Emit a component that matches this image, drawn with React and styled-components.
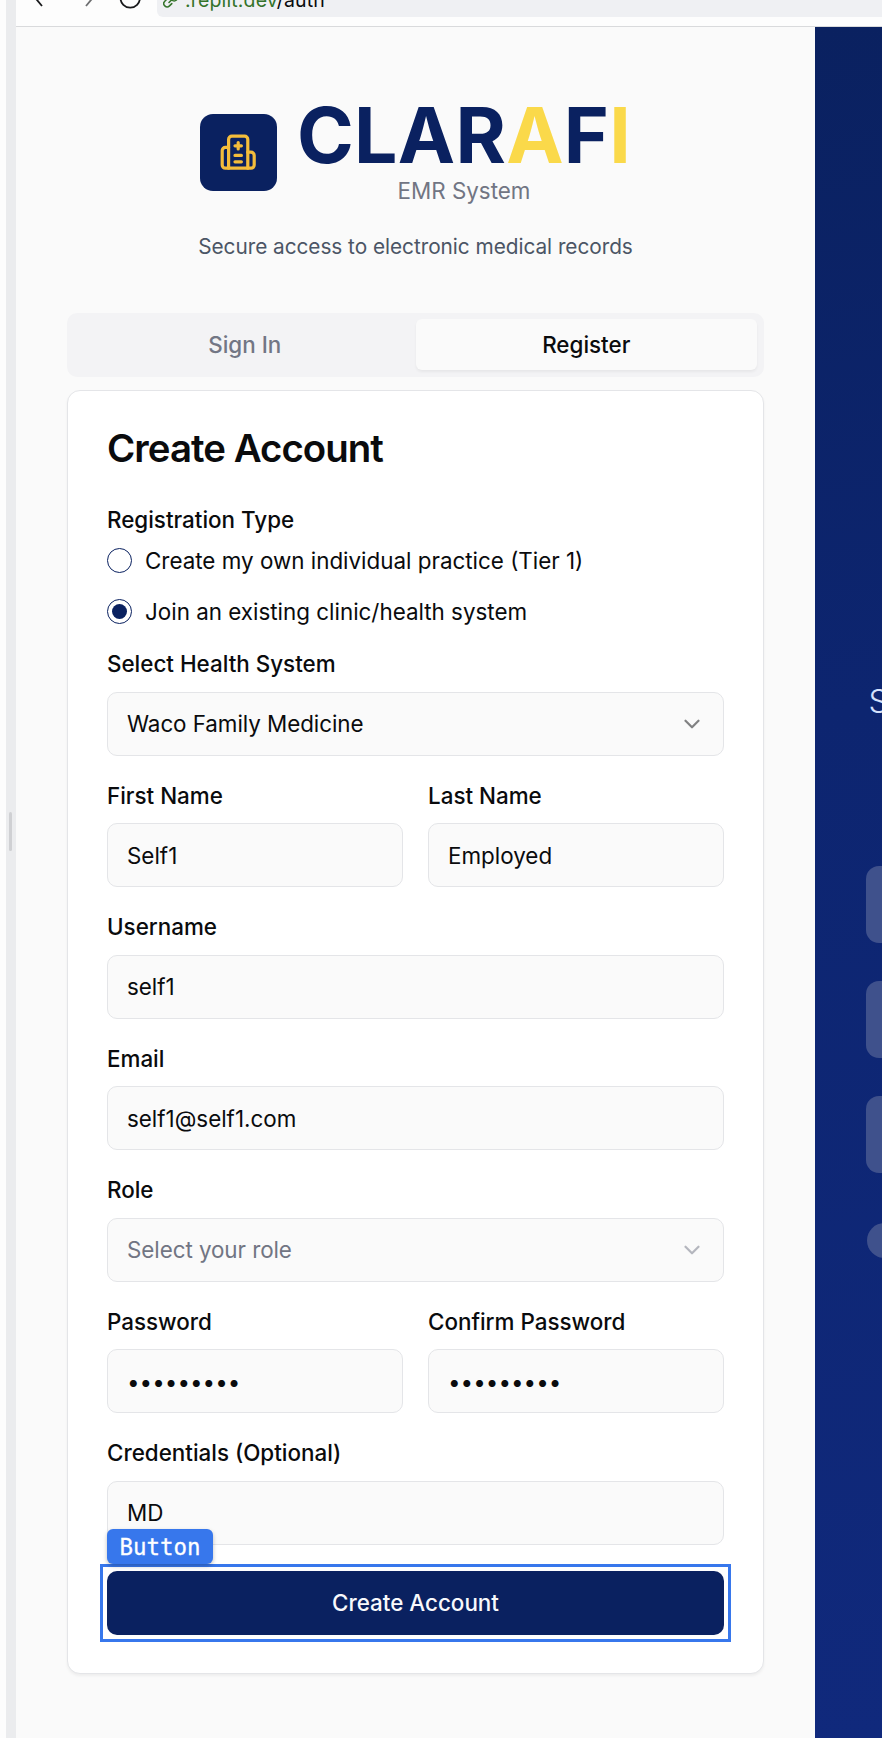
import React from "react";
import styled, { createGlobalStyle } from "styled-components";
import { ChevronDown } from "lucide-react";

const NAVY = "#0a2160";

const GlobalStyle = createGlobalStyle`
  * { box-sizing: border-box; }
  body {
    margin: 0;
    background: #fafafa;
    color: #0a0b0d;
    font-family: Inter, "Liberation Sans", sans-serif;
    -webkit-font-smoothing: antialiased;
  }
  input, button { font-family: inherit; }
`;

const Workspace = styled.div`
  display: flex;
  width: 882px;
  height: 1738px;
  overflow: hidden;
`;

const Resizer = styled.div`
  display: flex;
  align-items: center;
  flex: none;
  width: 16px;
  padding-left: 3px;
  padding-bottom: 75px;
  border-left: 6px solid #fdfdfd;
  background: #ebecee;
`;

const Grip = styled.span`
  width: 3px;
  height: 39px;
  border-radius: 2px;
  background: #cfd0d3;
`;

const Browser = styled.div`
  flex: 1;
  min-width: 0;
  display: flex;
  flex-direction: column;
`;

const BrowserBar = styled.header`
  display: flex;
  flex: none;
  height: 27px;
  background: #fdfdfd;
  border-bottom: 1px solid #d9dadc;
`;

const NavIcons = styled.svg`
  flex: none;
  width: 141px;
  height: 17px;
`;

const AddressBar = styled.div`
  flex: 1;
  display: flex;
  height: 17px;
  padding-left: 6px;
  border-radius: 0 0 0 6px;
  background: #eff0f3;
  overflow: hidden;
`;

const LinkIcon = styled.svg`
  width: 16px;
  height: 17px;
`;

const Address = styled.div`
  margin: -12px 0 0 6px;
  font-size: 19.5px;
  line-height: 25px;
  letter-spacing: 0.15px;
  white-space: nowrap;
`;

const Host = styled.span`
  color: #34732a;
`;

const Page = styled.main`
  flex: 1;
  display: flex;
  min-height: 0;
`;

const AuthPane = styled.section`
  flex: none;
  width: 799px;
  padding: 72px 51px 0;
`;

const Brand = styled.div`
  display: flex;
  justify-content: center;
  gap: 20px;
`;

const BrandMark = styled.div`
  display: flex;
  align-items: center;
  justify-content: center;
  width: 77px;
  height: 77px;
  margin-top: 15px;
  border-radius: 13px;
  background: ${NAVY};
`;

const BrandText = styled.div`
  text-align: center;
`;

const Wordmark = styled.h1`
  margin: -1px 0 0;
  color: ${NAVY};
  font-size: 76.8px;
  line-height: 76.8px;
  font-weight: 700;
  letter-spacing: 0.3px;
`;

const Accent = styled.span`
  color: #fad94a;
`;

const Product = styled.p`
  margin: 0;
  color: #717583;
  font-size: 22.4px;
  line-height: 32px;
`;

const Tagline = styled.p`
  margin: 24px 0 0;
  color: #4b5565;
  font-size: 20.8px;
  line-height: 32px;
  letter-spacing: -0.04px;
  text-align: center;
`;

const Tabs = styled.div`
  display: flex;
  height: 64px;
  margin-top: 50px;
  padding: 6px 7px 7px;
  border-radius: 10px;
  background: #f3f3f5;
`;

const Tab = styled.button`
  flex: 1;
  padding: 0;
  border: 0;
  border-radius: 6px;
  font-size: 22.4px;
  font-weight: 500;
  color: ${(p) => (p.$active ? "#0a0b0d" : "#727684")};
  background: ${(p) => (p.$active ? "#fafafa" : "transparent")};
  box-shadow: ${(p) => (p.$active ? "0 2px 3px rgba(0, 0, 0, 0.05)" : "none")};
`;

const Card = styled.form`
  height: 1284px;
  margin-top: 13px;
  padding: 38px 39px;
  border: 1px solid #e4e5e8;
  border-radius: 13px;
  background: #fff;
  box-shadow: 0 2px 3px rgba(0, 0, 0, 0.05);
`;

const CardTitle = styled.h2`
  margin: 0;
  font-size: 38.4px;
  line-height: 38px;
  font-weight: 600;
  letter-spacing: -0.96px;
`;

const RadioSection = styled.div`
  margin-top: 41px;
`;

const Label = styled.label`
  display: block;
  font-size: 22.4px;
  line-height: 24px;
  font-weight: 500;
  white-space: nowrap;
`;

const RadioRow = styled.div`
  display: flex;
  align-items: center;
  gap: 13px;
  height: 25px;
  margin-top: ${(p) => p.$gap}px;
  font-size: 22.4px;
`;

const Radio = styled.span`
  display: flex;
  align-items: center;
  justify-content: center;
  width: 25px;
  height: 25px;
  border: 1px solid ${NAVY};
  border-radius: 50%;
  &::after {
    content: "";
    width: 15px;
    height: 15px;
    border-radius: 50%;
    background: ${(p) => (p.$checked ? NAVY : "transparent")};
  }
`;

const Fields = styled.div`
  display: grid;
  grid-template-columns: 1fr 1fr;
  column-gap: 25px;
  row-gap: 28px;
  margin-top: 28px;
`;

const Field = styled.div`
  grid-column: ${(p) => (p.$half ? "span 1" : "span 2")};
  display: flex;
  flex-direction: column;
  gap: 15.5px;
`;

const Input = styled.input`
  width: 100%;
  height: 64px;
  padding: 0 19px;
  border: 1px solid #e4e5e8;
  border-radius: 10px;
  outline: 0;
  color: #0a0b0d;
  background: #fafafa;
  font-size: 22.4px;
`;

const Select = styled.div`
  display: flex;
  align-items: center;
  justify-content: space-between;
  height: 64px;
  padding: 0 18px 0 19px;
  border: 1px solid #e4e5e8;
  border-radius: 10px;
  background: #fafafa;
  color: ${(p) => (p.$placeholder ? "#717583" : "#0a0b0d")};
  font-size: 22.4px;
  letter-spacing: -0.06px;
  svg { opacity: 0.5; }
`;

const Submit = styled.button`
  position: relative;
  display: block;
  width: 100%;
  height: 64px;
  margin-top: 26px;
  border: 0;
  border-radius: 10px;
  color: #f8f9fc;
  background: ${NAVY};
  font-size: 22.4px;
  font-weight: 500;
  &::before {
    content: "";
    position: absolute;
    inset: -7px;
    border: 3px solid #3777ec;
  }
`;

const ElementBadge = styled.span`
  position: absolute;
  left: 0;
  bottom: 71px;
  width: 106px;
  height: 35px;
  border-radius: 6px;
  color: #fff;
  background: #3777ec;
  box-shadow: 0 2px 4px rgba(0, 0, 0, 0.25);
  font-family: "DejaVu Sans Mono", "Liberation Mono", monospace;
  font-size: 22.4px;
  line-height: 36px;
  font-weight: 400;
  -webkit-text-stroke: 0.3px #fff;
`;

const Hero = styled.aside`
  flex: 1;
  min-width: 0;
  padding: 655px 0 0 51px;
  overflow: hidden;
  background: linear-gradient(170deg, #0a2160, #0d2570 40%, #10297c);
`;

const HeroCopy = styled.p`
  margin: 0;
  padding-left: 2.5px;
  color: #d5e1fb;
  font-size: 32px;
  line-height: 40px;
  font-weight: 350;
`;

const HeroTiles = styled.div`
  display: flex;
  flex-direction: column;
  gap: 38px;
  margin-top: 144px;
`;

const HeroTile = styled.div`
  width: 77px;
  height: 77px;
  border-radius: 13px;
  background: #3f518c;
`;

const HeroDot = styled.div`
  width: 35px;
  height: 35px;
  margin: 50px 0 0 1px;
  border-radius: 50%;
  background: #3f518c;
`;

function Hospital() {
  return (
    <svg width="38.4" height="38.4" viewBox="0 0 24 24" fill="none" stroke="#f4bd3b" strokeWidth="2" strokeLinecap="round" strokeLinejoin="round">
      <path d="M12 6v4M14 14h-4M14 18h-4M14 8h-4" />
      <path d="M18 12h2a2 2 0 0 1 2 2v6a2 2 0 0 1-2 2H4a2 2 0 0 1-2-2v-9a2 2 0 0 1 2-2h2" />
      <path d="M18 22V4a2 2 0 0 0-2-2H8a2 2 0 0 0-2 2v18" />
    </svg>
  );
}

function TextField({ label, value, half, type = "text" }) {
  return (
    <Field $half={half}>
      <Label>{label}</Label>
      <Input type={type} defaultValue={value} />
    </Field>
  );
}

function SelectField({ label, value, placeholder }) {
  return (
    <Field>
      <Label>{label}</Label>
      <Select $placeholder={placeholder}>
        {value}
        <ChevronDown size={26} strokeWidth={2} />
      </Select>
    </Field>
  );
}

export default function App() {
  return (
    <Workspace>
      <GlobalStyle />
      <Resizer>
        <Grip />
      </Resizer>
      <Browser>
        <BrowserBar>
          <NavIcons viewBox="0 0 141 17" fill="none" strokeWidth="1.8">
            <path d="M18.500 -3 26 6" stroke="#18191b" />
            <path d="M77.500 -3 70 6" stroke="#6d6e70" />
            <path d="M104.500 -2a9.700 9.700 0 1 0 19.400 0" stroke="#18191b" />
          </NavIcons>
          <AddressBar>
            <LinkIcon viewBox="0 0 16 17" fill="none" stroke="#34732a" strokeWidth="1.5" strokeLinecap="round">
              <path d="M4 -1 1.800 1.200a3.300 3.300 0 0 0 4.700 4.700L8.800 3.600M6 2.500 9 -.5M8 -1a3.500 3.500 0 0 0 5.500 1" />
            </LinkIcon>
            <Address>
              <Host>.replit.dev</Host>/auth
            </Address>
          </AddressBar>
        </BrowserBar>
        <Page>
          <AuthPane>
            <Brand>
              <BrandMark>
                <Hospital />
              </BrandMark>
              <BrandText>
                <Wordmark>
                  CLAR<Accent>A</Accent>F<Accent>I</Accent>
                </Wordmark>
                <Product>EMR System</Product>
              </BrandText>
            </Brand>
            <Tagline>Secure access to electronic medical records</Tagline>
            <Tabs>
              <Tab>Sign In</Tab>
              <Tab $active>Register</Tab>
            </Tabs>
            <Card>
              <CardTitle>Create Account</CardTitle>
              <RadioSection>
                <Label>Registration Type</Label>
                <RadioRow $gap={16.5}>
                  <Radio />
                  Create my own individual practice (Tier 1)
                </RadioRow>
                <RadioRow $gap={26}>
                  <Radio $checked />
                  Join an existing clinic/health system
                </RadioRow>
              </RadioSection>
              <Fields>
                <SelectField label="Select Health System" value="Waco Family Medicine" />
                <TextField half label="First Name" value="Self1" />
                <TextField half label="Last Name" value="Employed" />
                <TextField label="Username" value="self1" />
                <TextField label="Email" value="self1@self1.com" />
                <SelectField label="Role" value="Select your role" placeholder />
                <TextField half type="password" label="Password" value="password1" />
                <TextField half type="password" label="Confirm Password" value="password1" />
                <TextField label="Credentials (Optional)" value="MD" />
              </Fields>
              <Submit type="button">
                Create Account
                <ElementBadge>Button</ElementBadge>
              </Submit>
            </Card>
          </AuthPane>
          <Hero>
            <HeroCopy>S</HeroCopy>
            <HeroTiles>
              <HeroTile />
              <HeroTile />
              <HeroTile />
            </HeroTiles>
            <HeroDot />
          </Hero>
        </Page>
      </Browser>
    </Workspace>
  );
}
